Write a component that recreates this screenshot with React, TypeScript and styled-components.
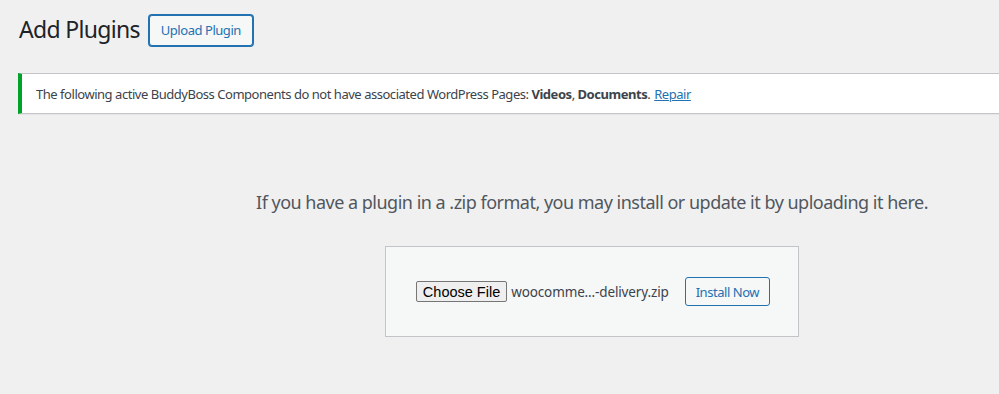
import React from "react";
import styled, { createGlobalStyle } from "styled-components";

const GlobalStyle = createGlobalStyle`
  html, body {
    margin: 0;
    padding: 0;
    background: #f0f0f1;
    overflow: hidden;
  }
  body {
    font-family: "Segoe UI", "Noto Sans", "Liberation Sans", sans-serif;
    color: #3c434a;
    font-size: 13px;
  }
`;

const Wrap = styled.div`
  width: 1148px;
  margin-left: 18px;
  padding-top: 12px;
`;

const Header = styled.div`
  display: flex;
  align-items: center;
  gap: 9px;
  height: 36px;
`;

const Title = styled.h1`
  margin: 0;
  padding-left: 1px;
  font-size: 23px;
  font-weight: 400;
  line-height: 1.3;
  letter-spacing: -0.03em;
  color: #1d2327;
`;

const OutlineButton = styled.button<{ $focused?: boolean }>`
  display: inline-flex;
  align-items: center;
  justify-content: center;
  box-sizing: border-box;
  height: ${(p) => (p.$focused ? "31px" : "29px")};
  padding: 0 ${(p) => (p.$focused ? "11px" : "10px")};
  border: 1px solid #2271b1;
  border-radius: 3px;
  background: #f6f7f7;
  color: #2271b1;
  font-family: inherit;
  font-size: 13px;
  font-weight: 400;
  letter-spacing: -0.035em;
  box-shadow: ${(p) => (p.$focused ? "0 0 0 1px #2271b1" : "none")};
  cursor: pointer;
`;

const Notice = styled.div`
  box-sizing: border-box;
  margin-top: 25px;
  height: 41px;
  display: flex;
  align-items: center;
  padding-left: 14px;
  background: #fff;
  border: 1px solid #c3c4c7;
  border-left: 4px solid #00a32a;
  box-shadow: 0 1px 1px rgba(0, 0, 0, 0.04);
  color: #3c434a;
  font-size: 13px;
  letter-spacing: -0.036em;
`;

const Link = styled.a`
  color: #2271b1;
  text-decoration: underline;
  margin-left: 4px;
`;

const UploadArea = styled.div`
  display: flex;
  flex-direction: column;
  align-items: center;
  padding-top: 75px;
`;

const Help = styled.p`
  margin: 0 0 30px;
  font-size: 18px;
  line-height: 1.5;
  letter-spacing: -0.028em;
  color: #50575e;
`;

const UploadBox = styled.form`
  box-sizing: border-box;
  width: 414px;
  height: 91px;
  display: flex;
  align-items: center;
  justify-content: center;
  gap: 16px;
  background: #f6f7f7;
  border: 1px solid #c3c4c7;
  padding-left: 2px;
`;

const FilePicker = styled.div`
  display: flex;
  align-items: center;
  gap: 4px;
`;

const NativeButton = styled.span`
  display: inline-flex;
  align-items: center;
  box-sizing: border-box;
  height: 21px;
  padding: 0 6px;
  background: #efefef;
  border: 1px solid #767676;
  border-radius: 2px;
  color: #000;
  font-family: "Liberation Sans", Arial, sans-serif;
  font-size: 14.5px;
`;

const FileName = styled.span`
  color: #3c434a;
  font-size: 13.5px;
  letter-spacing: -0.01em;
`;

export default function App() {
  return (
    <>
      <GlobalStyle />
      <Wrap>
        <Header>
          <Title>Add Plugins</Title>
          <OutlineButton $focused>Upload Plugin</OutlineButton>
        </Header>
        <Notice>
          <span>
            The following active BuddyBoss Components do not have associated
            WordPress Pages: <b>Videos</b>, <b>Documents</b>.
          </span>
          <Link href="#">Repair</Link>
        </Notice>
        <UploadArea>
          <Help>
            If you have a plugin in a .zip format, you may install or update it
            by uploading it here.
          </Help>
          <UploadBox>
            <FilePicker>
              <NativeButton>Choose File</NativeButton>
              <FileName>woocomme...-delivery.zip</FileName>
            </FilePicker>
            <OutlineButton type="button">Install Now</OutlineButton>
          </UploadBox>
        </UploadArea>
      </Wrap>
    </>
  );
}
